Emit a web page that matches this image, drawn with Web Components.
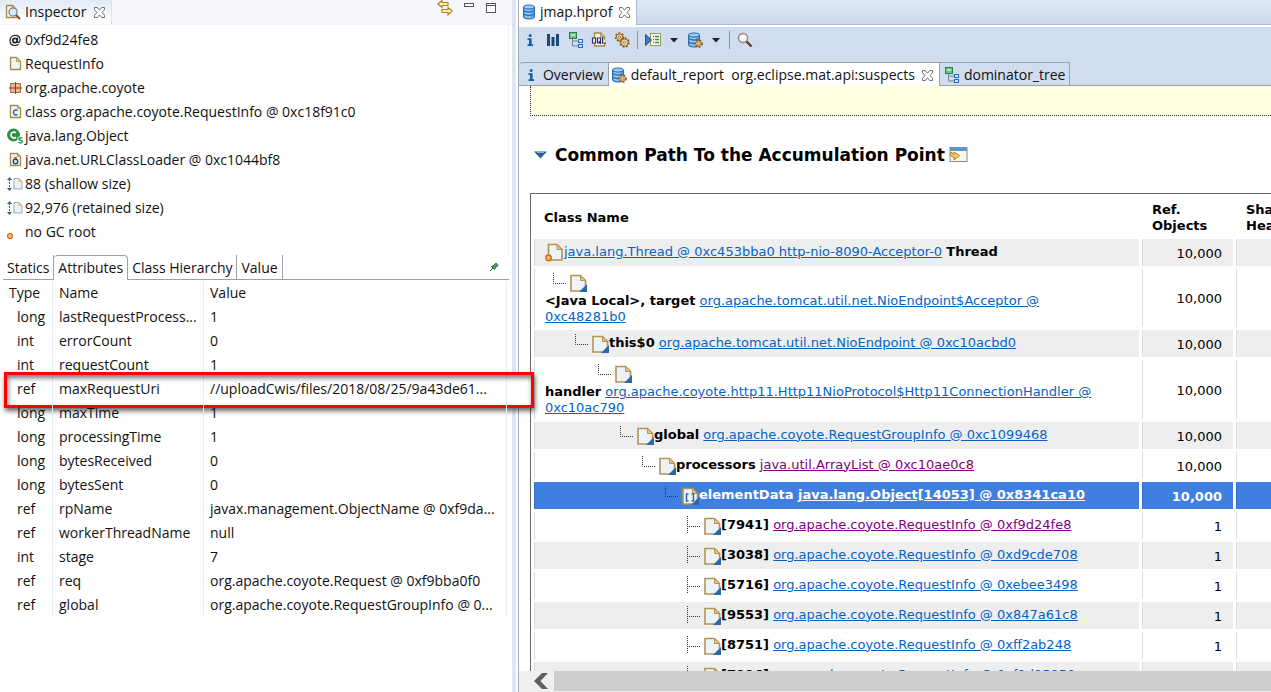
<!DOCTYPE html>
<html lang="en">
<head>
<meta charset="utf-8">
<title>Memory Analyzer</title>
<style>
  html, body { margin: 0; height: 100%; background: #fff; }
  body { font-family: "Open Sans", "Noto Sans", sans-serif; font-size: 14px; line-height: 24px; color: #111; overflow: hidden; }
</style>
</head>
<body>
<mat-workbench>
  <mat-inspector slot="side"></mat-inspector>
  <mat-editor slot="main"></mat-editor>
</mat-workbench>

<script>
const DB = `<path d="M1.500 3v10c0 1 2.500 2 5.500 2s5.500-1 5.500-2V3z" fill="#5fa5e4"/><path d="M1.500 6c0 1 2.500 2 5.500 2s5.500-1 5.500-2M1.500 9.500c0 1 2.500 2 5.500 2s5.500-1 5.500-2M1.500 3v10c0 1 2.500 2 5.500 2s5.500-1 5.500-2V3" fill="none" stroke="#2a6cb3"/><path d="M3 8.800c2 1 5 1 6 .6M3 12.300c2 1 5 1 6 .6M3 5.500c2 1 5 1 6 .6" stroke="#b7dbf7" fill="none"/><ellipse cx="7" cy="3" rx="5.500" ry="2" fill="#9fcdf3" stroke="#2b6cb3"/>`;
const gear = (x, y, r) => `<circle cx="${x}" cy="${y}" r="${r}" fill="none" stroke="#8a5a1c" stroke-width="2.400" stroke-dasharray="1.700 1.400"/><circle cx="${x}" cy="${y}" r="${r - .4}" fill="#f3d9a8" stroke="#9a6a2a"/><circle cx="${x}" cy="${y}" r="1.200" fill="#fff" stroke="#8a5a1c" stroke-width=".8"/>`;
const page = (x, y, w, h, f = 4) => `<path d="M${x} ${y}h${w - f}l${f} ${f}v${h - f}h-${w}z" fill="#eef4fd" stroke="#a98b45" stroke-width="1.300"/><path d="M${x + w - f} ${y}v${f}h${f}z" fill="#e9c978" stroke="#a98b45" stroke-width=".8"/>`;
const TREE = `<path d="M4.500 6v8h6M4.500 9h6" fill="none" stroke="#6f8196"/><rect x="1.500" y=".5" width="7" height="6" fill="#6cc08a" stroke="#2f7d49"/><path d="M3 2h4v2H3z" fill="#b5e6c4"/><rect x="10.500" y="7.500" width="4" height="3" fill="#cfe6fb" stroke="#2a6db5"/><rect x="10.500" y="12.500" width="4" height="3" fill="#cfe6fb" stroke="#2a6db5"/>`;
const SIZE = `<path d="M2.500 3v10" stroke="#2a6496" stroke-dasharray="2 1"/><path d="M0 4l2.500-3L5 4zM0 12l2.500 3L5 12z" fill="#2a6496"/><path d="M7 2.500h5l3 3v7.500H7z" fill="#eef3fb" stroke="#9aa4b5"/><path d="M11.500 2v4h4z" fill="#e6c067"/>`;
const BIGPAGE = `<path d="M1 1.500h9.500l5 5V17H1z" fill="#edf3fc" stroke="#b39550" stroke-width="1.600"/><path d="M10.500 1.500v5h5z" fill="#e8c573" stroke="#b39550"/>`;
const CORNER = `<path d="M17 10v8H9z" fill="#2a69a6"/>`;

const ICONS = {
  inspector: [16, 16, page(1.5, 1.5, 10, 12) + `<circle cx="8" cy="8" r="4" fill="#dcecfb" stroke="#7b8ea3" stroke-width="1.300"/><path d="M11 11l4 4" stroke="#8a4b23" stroke-width="2"/>`],
  at: [16, 16, `<circle cx="8" cy="8.500" r="2.200" fill="none" stroke="#222" stroke-width="1.700"/><path d="M10.500 5.500v4c0 2 2.600 1.500 2.600-1.500C13 4.800 11 3.300 8.300 3.300 5 3.300 3 5.600 3 8.600c0 3 2 4.900 5 4.900 1.500 0 2.500-.3 3.500-.9" fill="none" stroke="#222" stroke-width="1.200"/>`],
  page: [16, 16, page(3.5, 1.5, 10, 12)],
  package: [16, 16, `<rect x="3.500" y="3.500" width="10" height="9" fill="#e2ae84" stroke="#b5754c"/><path d="M8.500 2v12M2 8h13" stroke="#8a4a2a"/><path d="M5 5.500h2M10 5.500h2M5 10.500h2M10 10.500h2" stroke="#f4d6b8"/>`],
  cls: [16, 16, page(3.5, 1.5, 10, 12, 3) + `<path d="M10.500 6.500c-1.500-1-4-.5-4 2s2.500 3 4 2" fill="none" stroke="#1f5fa5" stroke-width="1.400"/>`],
  object: [17, 16, `<circle cx="6.500" cy="7" r="6.500" fill="#2f9148"/><path d="M9 4.800c-2-1.400-5-.6-5 2.200s3 3.600 5 2.200" fill="none" stroke="#fff" stroke-width="1.700"/><path d="M15.300 10.300c-1.200-.9-3.600-.7-3.600.8 0 1.600 3.700.8 3.700 2.500 0 1.500-2.600 1.700-4 .7" fill="none" stroke="#fff" stroke-width="3"/><path d="M15.300 10.300c-1.200-.9-3.600-.7-3.600.8 0 1.600 3.700.8 3.700 2.500 0 1.500-2.600 1.700-4 .7" fill="none" stroke="#2f9148" stroke-width="1.400"/>`],
  loader: [16, 16, page(3.5, 1.5, 10, 12, 3) + `<circle cx="8.500" cy="9.500" r="2.300" fill="#d3e6f8" stroke="#1e3f66" stroke-width="1.300"/><path d="M7 5h3l-.5 2h-2z" fill="#b0532a"/>`],
  size: [17, 16, SIZE],
  root: [16, 16, `<circle cx="3" cy="12" r="2.500" fill="#f6bb6c" stroke="#c0701b" stroke-width="1.200"/>`],
  pin: [10, 10, `<path d="M1 9l3-3" stroke="#444"/><path d="M2.500 4.500l3 3 1-2 2.500-2L7 1 5 3.500z" fill="#3fa65a" stroke="#1d6b35"/>`],
  close: [11, 11, `<path d="M.5 .5h2.800l2.200 2.700L7.700.5h2.800v2.200L8 5.500l2.500 2.800v2.200H7.700L5.500 7.800l-2.200 2.700H.5V8.300L3 5.500.5 2.700z" fill="#fff" stroke="#6f6f6f"/>`],
  sync: [16, 16, `<path d="M.8 4L5 .5v2h6v3H5v2zM15.200 11L11 7.500v2H5v3h6v2.500z" fill="#fff0b8" stroke="#b9801c" stroke-width="1.200"/>`],
  min: [10, 10, `<rect x=".5" y=".5" width="9" height="3" fill="#fff" stroke="#555"/>`],
  max: [10, 10, `<rect x=".5" y=".5" width="9" height="9" fill="#fff" stroke="#555"/><path d="M1 2.500h8" stroke="#555"/>`],
  db: [14, 16, DB],
  info: [16, 16, `<circle cx="8.200" cy="3.600" r="1.500" fill="#12609f"/><path d="M5.500 6.200H9.600v6h1.400V14H5.500v-1.800H7V8H5.500z" fill="#12609f"/>`],
  bars: [16, 16, `<path d="M2 2h3v12H2zM6.500 5h3v9h-3zM11 2h3v12h-3z" fill="#1e4672"/>`],
  tree: [16, 16, TREE],
  oql: [16, 16, page(3.5, 1, 10, 13) + `<path d="M1.500 6h3v5h-3zM6.500 6h3v5h-3zM8 9l2 3M11.600 5v6h3.400" fill="#fff" stroke="#252a60" stroke-width="1.200"/>`],
  gears: [16, 16, gear(5.5, 5, 3.6) + gear(10.5, 10.5, 4)],
  run: [16, 16, `<rect x="5.500" y="1.500" width="10" height="12" fill="#fbfde9" stroke="#9b9a55"/><path d="M8 4.500h1M10 4.500h4M8 7.500h1M10 7.500h4M8 10.500h1M10 10.500h4" stroke="#2f9148" stroke-width="1.300"/><path d="M.5 2.500v11L6.500 8z" fill="#3e83bb" stroke="#1a4f80"/>`],
  dbgear: [16, 16, DB + gear(11.5, 11.5, 3.2)],
  drop: [8, 5, `<path d="M0 0h8L4 4.500z" fill="#222"/>`],
  search: [16, 16, `<circle cx="6" cy="6" r="4.500" fill="#f2f8fd" stroke="#9b8a75" stroke-width="1.500"/><path d="M9.500 9.500l5 5" stroke="#5a3b25" stroke-width="2.400"/>`],
  twistie: [13, 8, `<path d="M0 .5h13L6.500 7.500z" fill="#2d5f93"/><path d="M3 1.500h7" stroke="#86aed4"/>`],
  open: [19, 16, `<rect x="1" y=".5" width="17" height="14" fill="#f7f7f2" stroke="#8e8b7c"/><path d="M1 .5h17v3.500H1z" fill="#5c94cf"/><path d="M1 6c0 3 2 4 4 4v3l5.500-4.500L5 5v2C4 7 3 6.500 3 5.500z" fill="#f8cb5c" stroke="#b57d1d"/>`],
  obj: [17, 18, BIGPAGE + CORNER],
  rootobj: [19, 19, `<path d="M3.500 1.500H12l5 5V17H3.500z" fill="#edf3fc" stroke="#b39550" stroke-width="1.600"/><path d="M12 1.500v5h5z" fill="#e8c573" stroke="#b39550"/><circle cx="3.500" cy="15" r="2.800" fill="#f6b26a" stroke="#c56c22" stroke-width="1.300"/>`],
  arrobj: [17, 18, BIGPAGE + CORNER + `<path d="M6.500 7H4.500v7h2M9.500 7h2v7h-2" fill="none" stroke="#2a69a6" stroke-width="1.500"/>`],
  last: [14, 18, `<path d="M.5 0v10.500H14" fill="none" stroke="#333" stroke-dasharray="1 1"/>`],
  mid: [14, 18, `<path d="M.5 0v18M0 10.500h14" fill="none" stroke="#333" stroke-dasharray="1 1"/>`],
  left: [14, 16, `<path d="M14 0H8L0 8l8 8h6L6.500 8z" fill="#606060"/>`]
};

class MatElement extends HTMLElement {
  connectedCallback() {
    if (this.shadowRoot) return;
    this.attachShadow({ mode: "open" }).innerHTML = this.render();
  }
}

class MatIcon extends MatElement {
  render() {
    const [w, h, body] = ICONS[this.getAttribute("name")];
    return `<style>:host{display:inline-block;flex:none;line-height:0}svg{display:block}</style><svg width="${w}" height="${h}" viewBox="0 0 ${w} ${h}" aria-hidden="true">${body}</svg>`;
  }
}

class MatWorkbench extends MatElement {
  render() {
    return `<style>
      :host{display:grid;grid-template-columns:minmax(0,41fr) minmax(0,60fr);height:100vh}
      .side{position:relative;z-index:1;display:flex;flex-direction:column;border-right:4px solid #dfe5f6;min-width:0}
      .main{display:flex;min-width:0;min-height:0;padding-left:2px}
      ::slotted(*){flex:1;min-width:0}
    </style>
    <div class="side"><slot name="side"></slot></div>
    <div class="main"><slot name="main"></slot></div>`;
  }
}

class MatInspector extends MatElement {
  render() {
    const facts = [["at", "0xf9d24fe8"], ["page", "RequestInfo"], ["package", "org.apache.coyote"],
      ["cls", "class org.apache.coyote.RequestInfo @ 0xc18f91c0"], ["object", "java.lang.Object"],
      ["loader", "java.net.URLClassLoader @ 0xc1044bf8"], ["size", "88 (shallow size)"],
      ["size", "92,976 (retained size)"], ["root", "no GC root"]];
    return `<style>
      :host{display:flex;flex-direction:column}
      header{display:flex;height:25px;background:#f4f6fb}
      .tab{display:flex;align-items:center;gap:4px;box-sizing:border-box;height:24px;padding:0 6px 0 5px;background:linear-gradient(#e3ebf7,#fff);border-right:1px solid #dde4f0}
      .tab mat-icon:last-child{margin-left:4px}
      .tools{display:flex;align-items:flex-start;gap:11px;margin-left:auto;padding-right:15px}
      button{all:unset;display:flex}
      .tools .low{padding:3px 1px 0 0}
      ul{margin:0 3px 0 0;padding:3px 0 11px;list-style:none;border-right:1px solid #eaf0fb}
      li{display:flex;align-items:center;gap:2px;height:24px;padding-left:7px;white-space:nowrap}
      li mat-icon{width:16px}
      nav{display:flex;align-items:stretch;height:24px;margin:0 3px;border-bottom:1px solid #a0a0a0}
      nav button{height:24px;line-height:26px;padding:0 4px;border-right:1px solid #a0a0a0;white-space:nowrap}
      nav button[aria-selected=true]{height:25px;background:#fff;border-top:1px solid #a0a0a0;border-radius:4px 4px 0 0;line-height:24px;margin-bottom:-1px;box-sizing:border-box}
      nav mat-icon{margin:7px 10px 0 auto}
    </style>
    <header>
      <div class="tab"><mat-icon name="inspector"></mat-icon><span>Inspector</span><mat-icon name="close"></mat-icon></div>
      <div class="tools">
        <button aria-label="Link with snapshot"><mat-icon name="sync"></mat-icon></button>
        <button class="low" aria-label="Minimize"><mat-icon name="min"></mat-icon></button>
        <button class="low" aria-label="Maximize"><mat-icon name="max"></mat-icon></button>
      </div>
    </header>
    <ul>${facts.map(([i, t]) => `<li><mat-icon name="${i}"></mat-icon><span>${t}</span></li>`).join("")}</ul>
    <nav role="tablist">
      <button role="tab">Statics</button><button role="tab" aria-selected="true">Attributes</button>
      <button role="tab">Class Hierarchy</button><button role="tab">Value</button>
      <mat-icon name="pin"></mat-icon>
    </nav>
    <mat-attributes></mat-attributes>`;
  }
}

class MatAttributes extends MatElement {
  render() {
    const rows = [["long", "lastRequestProcess...", "1"], ["int", "errorCount", "0"], ["int", "requestCount", "1"],
      ["ref", "maxRequestUri", "//uploadCwis/files/2018/08/25/9a43de61..."], ["long", "maxTime", "1"],
      ["long", "processingTime", "1"], ["long", "bytesReceived", "0"], ["long", "bytesSent", "0"],
      ["ref", "rpName", "javax.management.ObjectName @ 0xf9da..."], ["ref", "workerThreadName", "null"],
      ["int", "stage", "7"], ["ref", "req", "org.apache.coyote.Request @ 0xf9bba0f0"],
      ["ref", "global", "org.apache.coyote.RequestGroupInfo @ 0..."]];
    return `<style>
      :host{display:block;padding:1px 5px 0 0}
      table{width:100%;table-layout:fixed;border-collapse:separate;border-spacing:0}
      .type{width:53px}.name{width:151px}
      th,td{box-sizing:border-box;height:24px;padding:0 0 0 6px;border-right:1px solid #e6edf8;text-align:left;font-weight:400;white-space:nowrap}
      th:first-child{padding-left:9px}
      td:first-child{padding-left:17px}
      tr{position:relative}
      .mark{position:absolute;box-sizing:border-box;inset:-5px -27px -7px 4px;border:3px solid #f00;box-shadow:1px 3px 5px #0009,inset 1px 3px 5px #0008;pointer-events:none;background:linear-gradient(#fff,#fff) right/24px 100% no-repeat}
    </style>
    <table>
      <colgroup><col class="type"><col class="name"><col></colgroup>
      <thead><tr><th scope="col">Type</th><th scope="col">Name</th><th scope="col">Value</th></tr></thead>
      <tbody>${rows.map(([t, n, v]) => `<tr><td>${t}</td><td>${n}</td><td>${v}${n === "maxRequestUri" ? '<span class="mark"></span>' : ""}</td></tr>`).join("")}</tbody>
    </table>`;
  }
}

class MatToolbar extends MatElement {
  render() {
    const items = [["info", "Overview"], ["bars", "Histogram"], ["tree", "Dominator tree"], ["oql", "Query"], ["gears", "Thread overview"], null,
      ["run", "Run report"], ["drop", "Report list"], ["dbgear", "Query browser"], ["drop", "Query list"], null, ["search", "Find object"]];
    return `<style>
      :host{display:flex;align-items:center;height:26px;padding-bottom:9px;background:#cfddee}
      button{all:unset;display:flex;align-items:center;justify-content:center;width:23px;height:24px}
      button.drop{width:19px}
      i{width:1px;height:18px;margin:0 4px 0 3px;background:#8a929c}
    </style>${items.map(x => x ? `<button class="${x[0]}" aria-label="${x[1]}"><mat-icon name="${x[0]}"></mat-icon></button>` : "<i></i>").join("")}`;
  }
}

class MatPathTable extends MatElement {
  render() {
    const indent = d => Math.round(8 + (d - 1) * 134 / 6);
    const info = "org.apache.coyote.RequestInfo @ ";
    const rows = [
      [0, "", "java.lang.Thread @ 0xc453bba0 http-nio-8090-Acceptor-0", "10,000"],
      [1, "&lt;Java Local&gt;, target", "org.apache.tomcat.util.net.NioEndpoint$Acceptor @<br>0xc48281b0", "10,000", "wrap"],
      [2, "this$0", "org.apache.tomcat.util.net.NioEndpoint @ 0xc10acbd0", "10,000"],
      [3, "handler", "org.apache.coyote.http11.Http11NioProtocol$Http11ConnectionHandler @<br>0xc10ac790", "10,000", "wrap tall"],
      [4, "global", "org.apache.coyote.RequestGroupInfo @ 0xc1099468", "10,000"],
      [5, "processors", "java.util.ArrayList @ 0xc10ae0c8", "10,000", "seen"],
      [6, "elementData", "java.lang.Object[14053] @ 0x8341ca10", "10,000", "selected"],
      [7, "[7941]", info + "0xf9d24fe8", "1", "seen"],
      [7, "[3038]", info + "0xd9cde708", "1"],
      [7, "[5716]", info + "0xebee3498", "1"],
      [7, "[9553]", info + "0x847a61c8", "1"],
      [7, "[8751]", info + "0xff2ab248", "1"],
      [7, "[7996]", info + "0xf9d95950", "1"]];
    const line = ([d, label, link, n, cls = ""]) => {
      const icon = d === 0 ? "rootobj" : cls === "selected" ? "arrobj" : "obj";
      const tree = d === 0 ? "" : `<mat-icon class="branch" name="${d === 7 ? "mid" : "last"}"></mat-icon>`;
      return `<tr class="${cls}"><td><div class="cell">
        <span class="lead" style="padding-left:${d ? indent(d) : 0}px">${tree}<mat-icon name="${icon}"></mat-icon></span><span class="text">${label ? `<b>${label}</b> ` : ""}<a href="#">${link}</a>${d === 0 ? " <b>Thread</b>" : ""}</span>
        </div></td><td class="num">${n}</td><td></td></tr>`;
    };
    return `<style>
      :host{display:block;font:13px/16px "DejaVu Sans",sans-serif;color:#000}
      table{width:calc(100% + 66px);table-layout:fixed;border:1px solid #666;border-collapse:separate;border-spacing:3px;box-sizing:border-box}
      .num-col{width:91px}.heap-col{width:97px}
      th{box-sizing:border-box;height:39px;padding:3px 0 0 10px;text-align:left}
      td{box-sizing:border-box;height:27px;padding:0 0 0 10px;border-left:1px solid #ddd;vertical-align:top}
      tbody tr:nth-child(odd) td{background:#eee}
      tr.selected td{background:#3f7fdf!important;color:#fff;font-weight:700;border-color:#3570cc}
      tr.selected a{color:#fff}
      .num{padding:2px 11px 0 0;text-align:right;vertical-align:middle}
      .cell{display:flex;align-items:center;height:25px;white-space:nowrap}
      .lead{display:flex;align-items:center;gap:3px;padding-top:2px}
      .branch{margin-top:-2px}
      .wrap td{height:58px}
      .tall td{height:59px}
      .wrap .cell{display:block;height:auto}
      .wrap .lead{padding-top:4px;height:20px}
      .wrap .text{display:block}
      a{color:#0563c8;text-decoration:underline}
      .seen a{color:#800080}
    </style>
    <table>
      <colgroup><col><col class="num-col"><col class="heap-col"></colgroup>
      <thead><tr><th scope="col">Class Name</th><th scope="col">Ref.<br>Objects</th><th scope="col">Shallow<br>Heap</th></tr></thead>
      <tbody>${rows.map(line).join("")}</tbody>
    </table>`;
  }
}

class MatEditor extends MatElement {
  render() {
    return `<style>
      :host{display:flex;flex-direction:column;border-left:1px solid #a6adb8;overflow:hidden}
      .files{display:flex;flex:none;height:24px;background:linear-gradient(#dfe9f4,#cbdaeb);border-bottom:1px solid #a9bbd2;margin-bottom:2px}
      .file{display:flex;align-items:center;gap:4px;box-sizing:border-box;height:25px;padding:0 6px 1px 3px;background:#fff;border-right:1px solid #a9bbd2}
      .file mat-icon:last-child,.tab mat-icon:last-child{margin-left:3px}
      .tabs{display:flex;flex:none;height:23px;background:#cfddee;border-bottom:1px solid #9aa3ad}
      .tab{all:unset;display:flex;align-items:center;gap:4px;box-sizing:border-box;height:23px;padding:2px 4px 0 4px;border-top:1px solid #9aa3ad;border-right:1px solid #9aa3ad}
      .tab:first-child{border-top-left-radius:4px}
      .tab span{white-space:pre}
      .tab.on{height:24px;background:#fff;padding:1px 6px 0 2px}
      .scroll{flex:1;min-height:0;overflow:hidden;padding-left:11px}
      .note{height:29px;background:#ffffe1;border:dotted #333;border-width:0 0 1px 1px}
      h2{display:flex;align-items:center;gap:8px;height:77px;margin:0;padding-left:4px;font:bold 17px/24px "DejaVu Sans",sans-serif;color:#000;white-space:nowrap}
      h2 mat-icon:last-child{margin-left:-4px}
      .bar{display:flex;flex:none;height:20px;background:#f0f0f0;border-bottom:1px solid #f0f0f0}
      .bar button{all:unset;display:flex;align-items:center;justify-content:flex-end;box-sizing:border-box;width:35px;padding-right:6px}
      .thumb{flex:1;background:#cdcdcd}
    </style>
    <div class="files"><div class="file"><mat-icon name="db"></mat-icon><span>jmap.hprof</span><mat-icon name="close"></mat-icon></div></div>
    <mat-toolbar></mat-toolbar>
    <div class="tabs" role="tablist">
      <button class="tab" role="tab"><mat-icon name="info"></mat-icon><span>Overview</span></button>
      <button class="tab on" role="tab" aria-selected="true"><mat-icon name="dbgear"></mat-icon><span>default_report  org.eclipse.mat.api:suspects</span><mat-icon name="close"></mat-icon></button>
      <button class="tab" role="tab"><mat-icon name="tree"></mat-icon><span>dominator_tree</span></button>
    </div>
    <div class="scroll">
      <div class="note"></div>
      <h2><mat-icon name="twistie"></mat-icon><span>Common Path To the Accumulation Point</span><mat-icon name="open"></mat-icon></h2>
      <mat-path-table></mat-path-table>
    </div>
    <div class="bar"><button aria-label="Scroll left"><mat-icon name="left"></mat-icon></button><div class="thumb"></div></div>`;
  }
}

customElements.define("mat-icon", MatIcon);
customElements.define("mat-attributes", MatAttributes);
customElements.define("mat-toolbar", MatToolbar);
customElements.define("mat-path-table", MatPathTable);
customElements.define("mat-inspector", MatInspector);
customElements.define("mat-editor", MatEditor);
customElements.define("mat-workbench", MatWorkbench);
</script>
</body>
</html>
